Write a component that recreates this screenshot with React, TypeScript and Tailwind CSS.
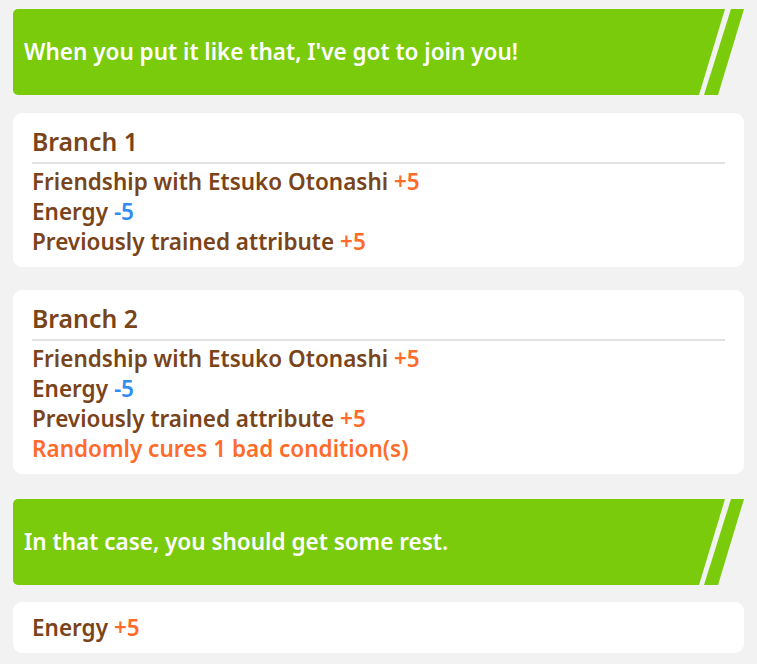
import React from "react";

const font = { fontFamily: "'Noto Sans', sans-serif" };

function Banner({ text }: { text: string }) {
  return (
    <div className="flex h-[86px] w-full">
      <div className="flex flex-1 items-center rounded-l-[5px] bg-[#7acb0c] pl-[11px]">
        <span className="text-[22.5px] font-semibold text-white leading-none">{text}</span>
      </div>
      <svg width="45" height="86" viewBox="0 0 45 86" className="block shrink-0">
        <polygon points="0,0 26,0 0,86" fill="#7acb0c" />
        <polygon points="32,0 45,0 19,86 5,86" fill="#7acb0c" />
      </svg>
    </div>
  );
}

type Part = { t: string; c?: string };

function Line({ parts }: { parts: Part[] }) {
  return (
    <div className="text-[22.5px] font-semibold leading-[30px] text-[#7a441a]">
      {parts.map((p, i) => (
        <span key={i} className={p.c}>
          {p.t}
        </span>
      ))}
    </div>
  );
}

const OR = "text-[#ff6b2b]";
const BL = "text-[#2f8df0]";

function BranchCard({ title, lines }: { title: string; lines: Part[][] }) {
  return (
    <div className="rounded-[9px] bg-white px-[19px] pt-[12px] pb-[10px]">
      <div className="border-b-2 border-[#e2e2e2] pb-[5px] text-[24.8px] font-semibold leading-[32px] text-[#7a441a]">
        {title}
      </div>
      <div className="pt-[3px]">
        {lines.map((l, i) => (
          <Line key={i} parts={l} />
        ))}
      </div>
    </div>
  );
}

export default function App() {
  const common: Part[][] = [
    [{ t: "Friendship with Etsuko Otonashi " }, { t: "+5", c: OR }],
    [{ t: "Energy " }, { t: "-5", c: BL }],
    [{ t: "Previously trained attribute " }, { t: "+5", c: OR }],
  ];
  return (
    <div className="min-h-[664px] w-full bg-[#f2f2f2] px-[13px] pt-[9px]" style={font}>
      <div className="flex w-[731px] flex-col">
        <Banner text="When you put it like that, I've got to join you!" />
        <div className="mt-[18px]">
          <BranchCard title="Branch 1" lines={common} />
        </div>
        <div className="mt-[23px]">
          <BranchCard
            title="Branch 2"
            lines={[...common, [{ t: "Randomly cures 1 bad condition(s)", c: OR }]]}
          />
        </div>
        <div className="mt-[25px]">
          <Banner text="In that case, you should get some rest." />
        </div>
        <div className="mt-[17px] flex h-[51px] items-center rounded-[9px] bg-white px-[19px]">
          <Line parts={[{ t: "Energy " }, { t: "+5", c: OR }]} />
        </div>
      </div>
    </div>
  );
}
